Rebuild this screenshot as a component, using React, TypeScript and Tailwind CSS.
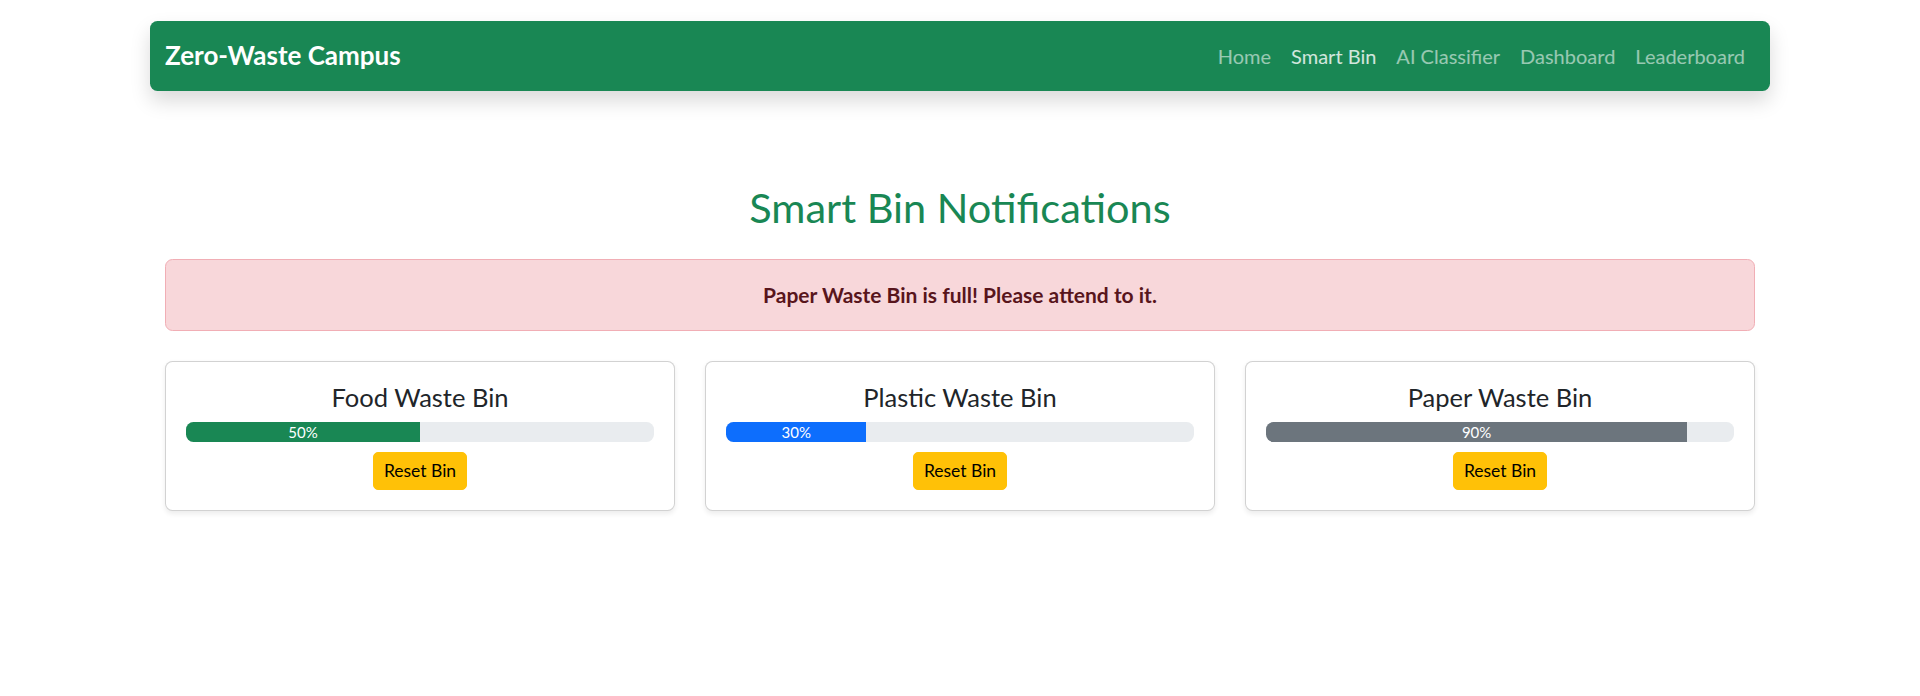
export default function App() {
  const bins = [
    { name: "Food Waste Bin", pct: 50, color: "bg-[#198754]" },
    { name: "Plastic Waste Bin", pct: 30, color: "bg-[#0d6efd]" },
    { name: "Paper Waste Bin", pct: 90, color: "bg-[#6c757d]" },
  ];
  const links = ["Home", "Smart Bin", "AI Classifier", "Dashboard", "Leaderboard"];
  return (
    <div className="min-h-screen bg-white font-['Lato',sans-serif] text-[#212529]">
      <div className="mx-auto max-w-[1650px] px-[15px]">
        <nav className="mt-[21px] flex h-[70px] items-center justify-between rounded-[7.5px] bg-[#198754] px-[15px] shadow-[0_10px_20px_rgba(0,0,0,0.15)]">
          <span className="text-[26px] font-bold leading-[37.5px] text-white">Zero-Waste Campus</span>
          <ul className="flex">
            {links.map((l) => (
              <li key={l}>
                <a
                  className={
                    l === "Smart Bin"
                      ? "block px-[10px] text-[20px] leading-[30px] text-white/80"
                      : "block px-[10px] text-[20px] leading-[30px] text-white/55"
                  }
                >
                  {l}
                </a>
              </li>
            ))}
          </ul>
        </nav>

        <div className="mx-auto max-w-[1620px] px-[15px]">
          <h2 className="mt-[92px] mb-[28px] text-center text-[41.5px] font-normal leading-[48px] text-[#198754]">
            Smart Bin Notifications
          </h2>
          <div className="mb-[30px] rounded-[7.5px] border border-[#f1aeb5] bg-[#f8d7da] p-5 text-center text-[21px] font-bold leading-[30px] text-[#58151c]">
            Paper Waste Bin is full! Please attend to it.
          </div>
          <div className="grid grid-cols-3 gap-[30px]">
            {bins.map((b) => (
              <div
                key={b.name}
                className="rounded-[7.5px] border border-[rgba(0,0,0,0.175)] bg-white p-5 text-center shadow-[0_2.5px_5px_rgba(0,0,0,0.075)]"
              >
                <h5 className="mb-[10px] text-[25.5px] font-normal leading-[30px] text-[#212529]">{b.name}</h5>
                <div className="flex h-5 overflow-hidden rounded-[7.5px] bg-[#e9ecef]">
                  <div
                    className={`flex items-center justify-center text-[15px] leading-5 text-white ${b.color}`}
                    style={{ width: `${b.pct}%` }}
                  >
                    {b.pct}%
                  </div>
                </div>
                <button className="mt-[10px] rounded-[5px] border border-[#ffc107] bg-[#ffc107] px-[10px] py-[5px] text-[17.5px] leading-[26px] text-black">
                  Reset Bin
                </button>
              </div>
            ))}
          </div>
        </div>
      </div>
    </div>
  );
}
